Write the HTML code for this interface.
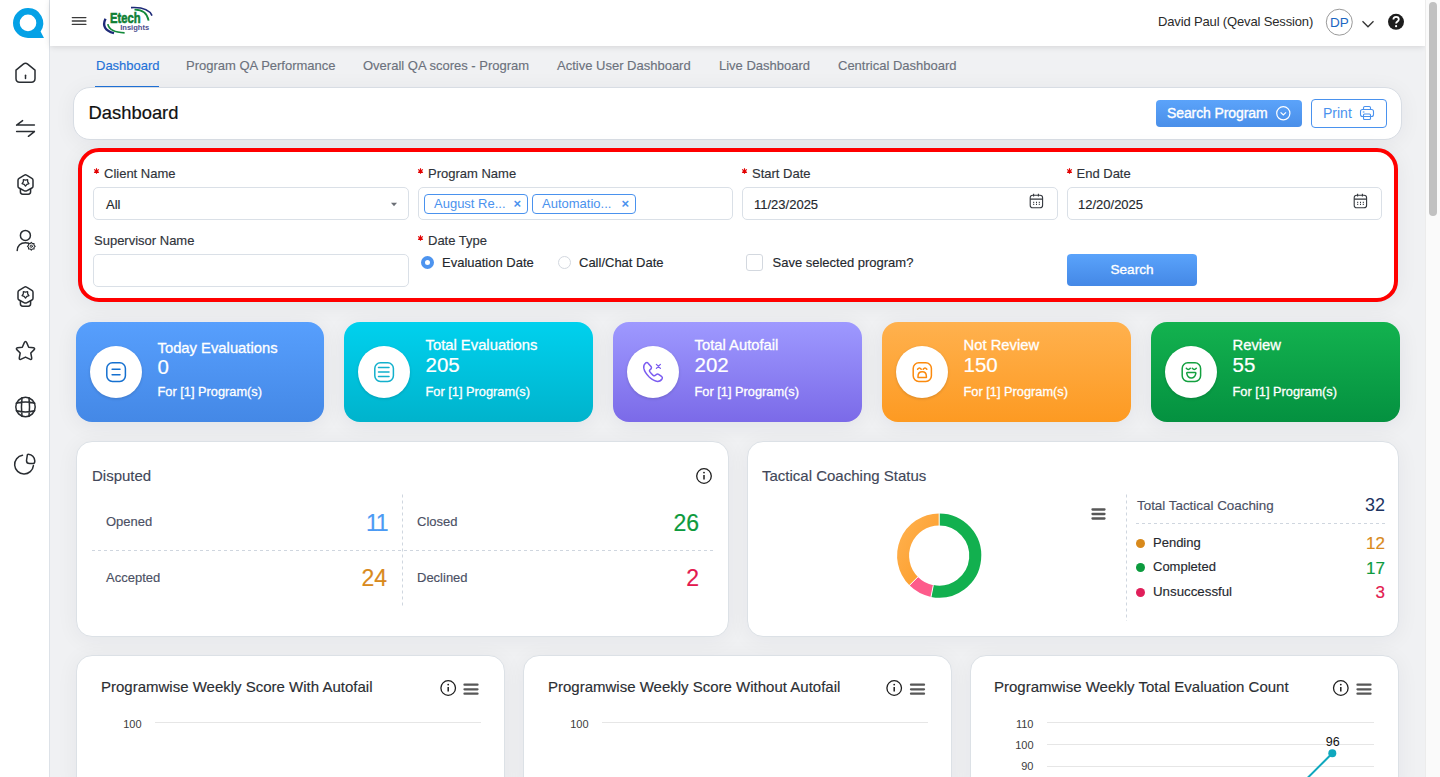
<!DOCTYPE html>
<html><head><meta charset="utf-8">
<style>
*{box-sizing:border-box;margin:0;padding:0}
html,body{width:1440px;height:777px;overflow:hidden;background:#f0f1f3;font-family:"Liberation Sans",sans-serif;color:#212529}
.abs{position:absolute}
#side{left:0;top:0;width:50px;height:777px;background:#fff;border-right:1px solid #dde2e8}
#side svg{position:absolute;left:0;top:0}
#hdr{left:50px;top:0;width:1375px;height:46px;background:#fff;box-shadow:0 1px 6px rgba(0,0,0,.12)}
#sb{left:1425px;top:0;width:15px;height:777px;background:#fafafa;border-left:1px solid #ececec}
#sb div{position:absolute;left:3px;top:2px;width:8px;height:214px;background:#c1c1c1;border-radius:4px}
.tab{top:57px;font-size:13px;color:#6c717d;line-height:17px;white-space:nowrap;-webkit-text-stroke:0.15px #6c717d}
.tab.act{color:#1f72d8;-webkit-text-stroke:0.15px #1f72d8}
.card{background:#fff;border-radius:16px;border:1px solid #dce1e6;box-shadow:0 3px 22px rgba(20,30,50,.055)}
.lbl{font-size:13px;color:#2f333a;line-height:16px;white-space:nowrap;-webkit-text-stroke:0.15px #2f333a}
.req{position:absolute;left:-12px;top:1.4px}
.inp{background:#fff;border:1px solid #dae0e7;border-radius:5px;height:32px}
.txt{font-size:13px;color:#24282e;white-space:nowrap;line-height:16px;-webkit-text-stroke:0.15px #24282e}
.stat{top:322px;width:249px;height:100px;border-radius:16px;box-shadow:0 3px 22px rgba(20,30,50,.07)}
.stat .circ{position:absolute;left:14px;top:24px;width:52px;height:52px;border-radius:50%;background:#fff;box-shadow:0 1px 3px rgba(0,0,0,.15)}
.stat .t1{position:absolute;left:81.5px;font-size:14.8px;color:#fff;white-space:nowrap;line-height:18px;-webkit-text-stroke:0.3px #fff}
.stat .t2{position:absolute;left:81.5px;font-size:20.5px;color:#fff;white-space:nowrap;line-height:22px;-webkit-text-stroke:0.2px #fff}
.stat .t3{position:absolute;left:81.5px;font-size:12.8px;color:#fff;white-space:nowrap;line-height:16px;-webkit-text-stroke:0.3px #fff}
.tag{height:20px;border:1px solid #4a92ee;border-radius:4px;color:#4a92ee;font-size:13px;line-height:18px;padding-left:9px;white-space:nowrap}
.tag span{position:absolute;right:6px;top:0;font-size:13px;font-weight:bold}
.ct{top:678px;font-size:15px;line-height:18px;color:#2b2e33;white-space:nowrap;-webkit-text-stroke:0.15px #2b2e33}
.dl{font-size:13px;color:#4b5064;white-space:nowrap;line-height:16px;-webkit-text-stroke:0.15px currentColor}
.dn{font-size:23px;white-space:nowrap;line-height:24px;-webkit-text-stroke:0.2px currentColor}
</style></head><body>

<!-- sidebar -->
<div id="side" class="abs">
<svg width="50" height="500" viewBox="0 0 50 500" fill="none" stroke="#292d32" stroke-width="1.5" stroke-linecap="round" stroke-linejoin="round">
 <path d="M28 8A15 15 0 1 0 28 38H44L40.6 31.4A15 15 0 0 0 28 8ZM28 14.6A8.3 8.3 0 1 1 28 31.2A8.3 8.3 0 1 1 28 14.6Z" fill="#04a1e6" stroke="none" fill-rule="evenodd"/>
 <!-- home -->
 <path d="M16 70.2L23.3 64.2Q25.5 62.4 27.7 64.2L35 70.2V78.6Q35 82.3 31.3 82.3H19.7Q16 82.3 16 78.6Z"/>
 <path d="M25.5 75.2V78.6"/>
 <!-- arrows -->
 <path d="M16.6 125.1H34.4M16.6 125.1L22.6 120.6M16.6 131.6H34.4M34.4 131.6L28.4 136.3"/>
 <!-- badge 1 -->
 <g transform="translate(0,0)">
 <path d="M24.4 175.2Q25.5 174.5 26.6 175.2L31.9 178.3Q33 179 33 180.2V186.2Q33 187.4 31.9 188L26.6 190.8Q25.5 191.4 24.4 190.8L19.1 188Q18 187.4 18 186.2V180.2Q18 179 19.1 178.3Z"/>
 <path d="M20.4 189V191.8Q20.4 194.2 22.8 194.2H28.2Q30.6 194.2 30.6 191.8V189"/>
 <path d="M25.50 186.10L24.15 184.36L22.08 183.61L23.31 181.79L23.38 179.59L25.50 180.20L27.62 179.59L27.69 181.79L28.92 183.61L26.85 184.36Z" stroke-width="1.3"/>
 </g>
 <!-- user gear -->
 <circle cx="25.4" cy="235.4" r="5"/>
 <path d="M17.2 250.5Q17.8 242.8 25.5 242.7Q27.5 242.7 28.8 243.2"/>
 <path d="M35.20 246.30L33.98 247.41L34.06 249.06L32.41 248.98L31.30 250.20L30.19 248.98L28.54 249.06L28.62 247.41L27.40 246.30L28.62 245.19L28.54 243.54L30.19 243.62L31.30 242.40L32.41 243.62L34.06 243.54L33.98 245.19Z" stroke-width="1.1"/>
 <circle cx="31.3" cy="246.3" r="1.1" stroke-width="1"/>
 <!-- badge 2 -->
 <g transform="translate(0,112)">
 <path d="M24.4 175.2Q25.5 174.5 26.6 175.2L31.9 178.3Q33 179 33 180.2V186.2Q33 187.4 31.9 188L26.6 190.8Q25.5 191.4 24.4 190.8L19.1 188Q18 187.4 18 186.2V180.2Q18 179 19.1 178.3Z"/>
 <path d="M20.4 189V191.8Q20.4 194.2 22.8 194.2H28.2Q30.6 194.2 30.6 191.8V189"/>
 <path d="M25.50 186.10L24.15 184.36L22.08 183.61L23.31 181.79L23.38 179.59L25.50 180.20L27.62 179.59L27.69 181.79L28.92 183.61L26.85 184.36Z" stroke-width="1.3"/>
 </g>
 <!-- star -->
 <path d="M25.5 341.6Q26.2 341.6 26.8 342.9L28.7 347.2L33.5 347.8Q35.3 348.2 34.2 349.6L30.8 353L31.7 357.9Q31.9 360 30.3 359.4L25.5 357.1L20.7 359.4Q19.1 360 19.3 357.9L20.2 353L16.8 349.6Q15.7 348.2 17.5 347.8L22.3 347.2L24.2 342.9Q24.8 341.6 25.5 341.6Z"/>
 <!-- globe -->
 <circle cx="25.5" cy="407" r="9.7"/>
 <path d="M22 397.8Q20.9 407 22 416.2M29 397.8Q30.1 407 29 416.2M16.4 403.2Q25.5 400.9 34.6 403.2M16.4 410.8Q25.5 413.1 34.6 410.8"/>
 <!-- pie -->
 <path d="M22.5 455.3A9.4 9.4 0 1 0 33.4 465.6"/>
 <path d="M27.3 455.1Q27.3 454.2 28.2 454.2Q34.2 454.8 34.8 460.9Q34.8 463.6 33 463.6H29.6Q26.5 463.6 26.5 460.5Z"/>
</svg>
</div>

<!-- header -->
<div id="hdr" class="abs">
<svg style="position:absolute;left:0;top:0" width="1375" height="46" viewBox="50 0 1375 46">
 <path d="M72.3 17.6H85.9M72.3 21H85.9M72.3 24.4H85.9" stroke="#3a3a3a" stroke-width="1.3" stroke-linecap="round"/>
 <!-- logo -->
 <path d="M131 7.6Q148 6.6 152 15.6" fill="none" stroke="#1e2a78" stroke-width="1.7"/>
 <path d="M134.5 9.6Q146.5 9.4 148.6 20.6" fill="none" stroke="#138a3b" stroke-width="1.8"/>
 <path d="M105.5 18.8Q100.5 29.5 114 33.2" fill="none" stroke="#1e2a78" stroke-width="2.4"/>
 <path d="M107.8 24.2Q109.5 32.4 124.6 32.8" fill="none" stroke="#138a3b" stroke-width="1.7"/>
 <text x="110" y="22.6" font-family="Liberation Sans" font-weight="bold" font-size="14.5" fill="#0f7f35" stroke="#0f7f35" stroke-width="0.6" textLength="30.5" lengthAdjust="spacingAndGlyphs">Etech</text>
 <text x="120.2" y="30.3" font-family="Liberation Sans" font-weight="bold" font-size="7.8" fill="#4d4e8e" textLength="29" lengthAdjust="spacingAndGlyphs">Insights</text>
 <!-- right -->
 <circle cx="1339.3" cy="22.2" r="13" fill="#fff" stroke="#9a9a9a" stroke-width="1"/>
 <text x="1339.3" y="26.8" text-anchor="middle" font-family="Liberation Sans" font-size="13.5" fill="#1a66c2">DP</text>
 <path d="M1362.5 21.3L1368 26.8L1373.5 21.3" fill="none" stroke="#333" stroke-width="1.3"/>
 <circle cx="1396" cy="21.8" r="8" fill="#1d1d1d"/>
 <path d="M1393.4 19.6Q1393.4 16.8 1396.1 16.8Q1398.8 16.8 1398.8 19.3Q1398.8 20.8 1397.3 21.6Q1396.1 22.3 1396.1 23.6" fill="none" stroke="#fff" stroke-width="1.8"/>
 <circle cx="1396.1" cy="26.2" r="1.1" fill="#fff"/>
</svg>
<div class="abs" style="left:1108px;top:14px;font-size:13px;line-height:16px;color:#2a2a2a;white-space:nowrap;width:155px;text-align:right;letter-spacing:-0.15px">David Paul (Qeval Session)</div>
</div>
<div id="sb" class="abs"><div></div></div>

<!-- tabs -->
<div class="abs tab act" style="left:96px">Dashboard</div>
<div class="abs" style="left:95px;top:85.5px;width:64px;height:1.8px;background:#1f72d8"></div>
<div class="abs tab" style="left:186px">Program QA Performance</div>
<div class="abs tab" style="left:363px">Overall QA scores - Program</div>
<div class="abs tab" style="left:557px">Active User Dashboard</div>
<div class="abs tab" style="left:719px">Live Dashboard</div>
<div class="abs tab" style="left:838px">Centrical Dashboard</div>

<!-- title card -->
<div class="abs card" style="left:73px;top:87px;width:1329px;height:53px;border:1px solid #d8dde4;border-radius:17px"></div>
<div class="abs" style="left:88.5px;top:102px;font-size:18.4px;line-height:21px;color:#111;-webkit-text-stroke:0.2px #111">Dashboard</div>
<div class="abs" style="left:1156px;top:100px;width:146px;height:27px;border-radius:4px;background:linear-gradient(#5ba3fa,#4a8fe9)"></div>
<div class="abs" style="left:1167px;top:105px;font-size:14px;line-height:16px;color:#fff;white-space:nowrap;letter-spacing:-0.1px;-webkit-text-stroke:0.35px #fff">Search Program</div>
<svg class="abs" style="left:1275px;top:105px" width="17" height="17" fill="none" stroke="#fff" stroke-width="1.2"><circle cx="8.3" cy="8.3" r="6.6"/><path d="M5.6 7.3L8.3 10L11 7.3"/></svg>
<div class="abs" style="left:1311px;top:99px;width:76px;height:29px;border-radius:4px;border:1px solid #4a92ee;background:#fff"></div>
<div class="abs" style="left:1323px;top:105px;font-size:14px;line-height:16px;color:#4a92ee;white-space:nowrap">Print</div>
<svg class="abs" style="left:1359px;top:105px" width="16" height="16" fill="none" stroke="#4a92ee" stroke-width="1.1"><path d="M4.5 4.5V2.8Q4.5 1.5 5.8 1.5H10.2Q11.5 1.5 11.5 2.8V4.5"/><rect x="1.5" y="4.5" width="13" height="7" rx="2"/><rect x="4.5" y="9" width="7" height="5.5" rx="1"/><path d="M3.8 7h1.6"/></svg>

<!-- filter card -->
<div class="abs" style="left:78px;top:148px;width:1320px;height:154px;border:4px solid #f00;border-radius:21px;background:#fff;box-shadow:0 0 0 1px #dfeef3,0 3px 22px rgba(20,30,50,.06)"></div>
<!-- labels -->
<div class="abs lbl" style="left:104px;top:166px"><svg class="req" width="8" height="8" viewBox="0 0 8 8"><path d="M4.5 1.2V6.8M2.1 2.6L6.9 5.4M2.1 5.4L6.9 2.6" stroke="#e20000" stroke-width="1.1"/></svg>Client Name</div>
<div class="abs lbl" style="left:428px;top:166px"><svg class="req" width="8" height="8" viewBox="0 0 8 8"><path d="M4.5 1.2V6.8M2.1 2.6L6.9 5.4M2.1 5.4L6.9 2.6" stroke="#e20000" stroke-width="1.1"/></svg>Program Name</div>
<div class="abs lbl" style="left:752px;top:166px"><svg class="req" width="8" height="8" viewBox="0 0 8 8"><path d="M4.5 1.2V6.8M2.1 2.6L6.9 5.4M2.1 5.4L6.9 2.6" stroke="#e20000" stroke-width="1.1"/></svg>Start Date</div>
<div class="abs lbl" style="left:1076.5px;top:166px"><svg class="req" width="8" height="8" viewBox="0 0 8 8"><path d="M4.5 1.2V6.8M2.1 2.6L6.9 5.4M2.1 5.4L6.9 2.6" stroke="#e20000" stroke-width="1.1"/></svg>End Date</div>
<div class="abs lbl" style="left:94px;top:233px">Supervisor Name</div>
<div class="abs lbl" style="left:428px;top:233px"><svg class="req" width="8" height="8" viewBox="0 0 8 8"><path d="M4.5 1.2V6.8M2.1 2.6L6.9 5.4M2.1 5.4L6.9 2.6" stroke="#e20000" stroke-width="1.1"/></svg>Date Type</div>
<!-- inputs -->
<div class="abs inp" style="left:93px;top:187px;height:33px;width:316px"></div>
<div class="abs txt" style="left:106px;top:197px">All</div>
<svg class="abs" style="left:390px;top:202px" width="8" height="5"><path d="M1 0.8H7L4 4.2Z" fill="#6b6f76"/></svg>
<div class="abs inp" style="left:418px;top:187px;height:33px;width:315px"></div>
<div class="abs tag" style="left:424px;top:194px;width:104px">August Re...<span>&#215;</span></div>
<div class="abs tag" style="left:532px;top:194px;width:104px">Automatio...<span>&#215;</span></div>
<div class="abs inp" style="left:742px;top:187px;height:33px;width:316px"></div>
<div class="abs txt" style="left:754px;top:197px">11/23/2025</div>
<div class="abs inp" style="left:1067px;top:187px;height:33px;width:315px"></div>
<div class="abs txt" style="left:1078px;top:197px">12/20/2025</div>
<svg class="abs" style="left:1028px;top:193px" width="16" height="16" fill="none" stroke="#33373d" stroke-width="1.1"><rect x="2.2" y="2.2" width="12.4" height="12.6" rx="2.6"/><path d="M2.2 6.1H14.6M5.6 0.8V3.6M10.4 0.8V3.6"/><path d="M5.2 9.3h1M8 9.3h1M10.8 9.3h1M5.2 11.4h1M8 11.4h1M10.8 11.4h1" stroke-width="1.2"/></svg>
<svg class="abs" style="left:1352px;top:193px" width="16" height="16" fill="none" stroke="#33373d" stroke-width="1.1"><rect x="2.2" y="2.2" width="12.4" height="12.6" rx="2.6"/><path d="M2.2 6.1H14.6M5.6 0.8V3.6M10.4 0.8V3.6"/><path d="M5.2 9.3h1M8 9.3h1M10.8 9.3h1M5.2 11.4h1M8 11.4h1M10.8 11.4h1" stroke-width="1.2"/></svg>
<div class="abs inp" style="left:93px;top:254px;height:33px;width:316px"></div>
<!-- radios -->
<div class="abs" style="left:420.5px;top:255.5px;width:13.5px;height:13.5px;border-radius:50%;border:4px solid #4d94ef;background:#fff"></div>
<div class="abs txt" style="left:442px;top:254.5px">Evaluation Date</div>
<div class="abs" style="left:557.8px;top:255.5px;width:13.5px;height:13.5px;border-radius:50%;border:1px solid #d3d8df;background:#fff"></div>
<div class="abs txt" style="left:579px;top:254.5px">Call/Chat Date</div>
<div class="abs" style="left:746px;top:254px;width:17px;height:17px;border-radius:3px;border:1px solid #d3d8df;background:#fff"></div>
<div class="abs txt" style="left:772.5px;top:254.5px">Save selected program?</div>
<div class="abs btn" style="left:1067px;top:254px;width:130px;height:32px;background:linear-gradient(#5aa3fb,#4488e6);border-radius:4px;color:#fff;font-size:13.6px;-webkit-text-stroke:0.35px #fff;line-height:32px;text-align:center">Search</div>

<!-- stat cards -->
<div class="abs stat" style="left:76px;width:248px;background:linear-gradient(#579ffd,#4488e6)"><div class="circ"><svg style="position:absolute;left:10px;top:9px" width="32" height="32" fill="none" stroke="#1570d0" stroke-width="1.5" stroke-linecap="round" stroke-linejoin="round"><rect x="6.8" y="7.8" width="18.6" height="18.6" rx="5.6"/><path d="M12.1 14.2H20M12.1 19.7H20"/></svg></div>
 <div class="t1" style="top:17px">Today Evaluations</div>
 <div class="t2" style="top:33.5px">0</div>
 <div class="t3" style="top:62px">For [1] Program(s)</div></div>
<div class="abs stat" style="left:344px;background:linear-gradient(#00d1ee,#00b3cc)"><div class="circ"><svg style="position:absolute;left:10px;top:9px" width="32" height="32" fill="none" stroke="#12b0cc" stroke-width="1.5" stroke-linecap="round" stroke-linejoin="round"><rect x="6.8" y="7.8" width="18.6" height="18.6" rx="5.6"/><path d="M10.5 12.4H21M10.5 16.9H21M10.5 21.4H21"/></svg></div>
 <div class="t1" style="top:14px">Total Evaluations</div>
 <div class="t2" style="top:32px">205</div>
 <div class="t3" style="top:62px">For [1] Program(s)</div></div>
<div class="abs stat" style="left:613px;background:linear-gradient(#9e99ff,#7b6ae8)"><div class="circ"><svg style="position:absolute;left:10px;top:9px" width="32" height="32" fill="none" stroke="#7b5cf0" stroke-width="1.5" stroke-linecap="round" stroke-linejoin="round"><path d="M11.3 8.4Q10.2 7 8.6 8Q6.3 9.8 6.8 13.2Q7.6 17.5 12.2 22Q16.8 26.2 20.6 26.4Q23.6 26.4 25.2 23.6Q25.8 22.3 24.5 21.4L21.6 19.4Q20.4 18.6 19.2 19.6L17.8 20.6Q17 21 16.2 20.4Q14 18.5 12.6 16.4Q12.2 15.6 12.8 15L14.2 13.6Q14.8 12.8 14.2 11.8Z"/><path d="M19.4 9.4L23.4 13.4M23.4 9.4L19.4 13.4" stroke-width="1.3"/></svg></div>
 <div class="t1" style="top:14px">Total Autofail</div>
 <div class="t2" style="top:32px">202</div>
 <div class="t3" style="top:62px">For [1] Program(s)</div></div>
<div class="abs stat" style="left:882px;background:linear-gradient(#ffb14e,#fd9a22)"><div class="circ"><svg style="position:absolute;left:10px;top:9px" width="32" height="32" fill="none" stroke="#fb8a0e" stroke-width="1.5" stroke-linecap="round" stroke-linejoin="round"><rect x="7.2" y="7.8" width="18.2" height="18.6" rx="5.6"/><path d="M11.6 14.3Q13.4 11.8 15.2 14.3M17.2 14.3Q19 11.8 20.8 14.3"/><path d="M12 22.4V21.4Q12 16.8 16.2 16.8Q20.4 16.8 20.4 21.4V22.4Z"/></svg></div>
 <div class="t1" style="top:14px">Not Review</div>
 <div class="t2" style="top:32px">150</div>
 <div class="t3" style="top:62px">For [1] Program(s)</div></div>
<div class="abs stat" style="left:1151px;background:linear-gradient(#13b24f,#049140)"><div class="circ"><svg style="position:absolute;left:10px;top:9px" width="32" height="32" fill="none" stroke="#13a03f" stroke-width="1.5" stroke-linecap="round" stroke-linejoin="round"><rect x="7.2" y="7.8" width="18.4" height="18.6" rx="5.6"/><path d="M11.3 13.3Q13.3 15.6 15.3 13.3M17.3 13.3Q19.3 15.6 21.3 13.3"/><path d="M12.3 17.6H20.3Q21 17.6 20.8 18.6Q19.8 23 16.3 23Q12.8 23 11.8 18.6Q11.6 17.6 12.3 17.6Z"/></svg></div>
 <div class="t1" style="top:14px">Review</div>
 <div class="t2" style="top:32px">55</div>
 <div class="t3" style="top:62px">For [1] Program(s)</div></div>

<!-- disputed -->
<div class="abs card" style="left:76px;top:441px;width:653px;height:196px;"></div>
<div class="abs" style="left:92px;top:467px;font-size:15px;line-height:18px;color:#424759;white-space:nowrap;-webkit-text-stroke:0.15px #424759">Disputed</div>
<svg class="abs" style="left:694px;top:466px" width="20" height="20" fill="none" stroke="#1f1f1f" stroke-width="1.3"><circle cx="10" cy="10" r="7.3"/><path d="M10 9V13.6" stroke-width="1.5"/><circle cx="10" cy="6.6" r="0.9" fill="#1f1f1f" stroke="none"/></svg>
<svg class="abs" style="left:90px;top:494px" width="630" height="114"><path d="M312.5 0.5V112" stroke="#cfd6df" stroke-width="1" stroke-dasharray="3 3"/><path d="M2 56.5H624" stroke="#cfd6df" stroke-width="1" stroke-dasharray="3 3"/></svg>
<div class="abs dl" style="left:106px;top:513.5px">Opened</div>
<div class="abs dl" style="left:106px;top:569.5px">Accepted</div>
<div class="abs dl" style="left:417px;top:513.5px">Closed</div>
<div class="abs dl" style="left:417px;top:569.5px">Declined</div>
<div class="abs dn" style="left:287px;width:100px;text-align:right;top:511px;color:#4b9af4;letter-spacing:-1.5px">11</div>
<div class="abs dn" style="left:287px;width:100px;text-align:right;top:566px;color:#d98a1c">24</div>
<div class="abs dn" style="left:599px;width:100px;text-align:right;top:511px;color:#0d9a3d">26</div>
<div class="abs dn" style="left:599px;width:100px;text-align:right;top:566px;color:#e3194f">2</div>
<!-- tactical -->
<div class="abs card" style="left:747px;top:441px;width:652px;height:196px;"></div>
<div class="abs" style="left:762px;top:467px;font-size:15px;line-height:18px;color:#424759;white-space:nowrap;-webkit-text-stroke:0.15px #424759">Tactical Coaching Status</div>
<svg class="abs" style="left:889px;top:505px" width="100" height="100">
 <defs><linearGradient id="og" x1="0" y1="0" x2="1" y2="1"><stop offset="0" stop-color="#ffb04c"/><stop offset="1" stop-color="#fb9a26"/></linearGradient></defs>
 <g transform="translate(50.2,50.6)" fill="none" stroke-width="12">
  <path d="M0 -36.1A36.1 36.1 0 1 1 -7.04 35.41" stroke="#12b04f"/>
  <path d="M-7.04 35.41A36.1 36.1 0 0 1 -25.53 25.53" stroke="#fd5b8b"/>
  <path d="M-25.53 25.53A36.1 36.1 0 0 1 0 -36.1" stroke="url(#og)"/>
  <path d="M0 -43V-29M-8.4 42.2L-5.9 29.7M-30.4 30.4L-21.4 21.4" stroke="#fff" stroke-width="1"/>
 </g>
</svg>
<svg class="abs" style="left:1089px;top:506.4px" width="20" height="16"><path d="M3.5 3.5H15.5M3.5 8H15.5M3.5 12.5H15.5" stroke="#575757" stroke-width="2.3" stroke-linecap="round"/></svg>
<svg class="abs" style="left:1125px;top:494px" width="262" height="128"><path d="M1.5 0.5V127" stroke="#cfd6df" stroke-width="1" stroke-dasharray="3 3"/><path d="M11 29.5H260" stroke="#cfd6df" stroke-width="1" stroke-dasharray="3 3"/></svg>
<div class="abs dl" style="left:1137px;top:497.5px;font-size:13.4px">Total Tactical Coaching</div>
<div class="abs" style="left:1285px;width:100px;text-align:right;top:494px;font-size:18px;line-height:22px;color:#1d3461">32</div>
<div class="abs" style="left:1136px;top:539px;width:9px;height:9px;border-radius:50%;background:#d8891b"></div>
<div class="abs" style="left:1136px;top:563px;width:9px;height:9px;border-radius:50%;background:#0c9b3e"></div>
<div class="abs" style="left:1136px;top:587.5px;width:9px;height:9px;border-radius:50%;background:#e01f5a"></div>
<div class="abs dl" style="left:1153px;top:534.5px;color:#26292f">Pending</div>
<div class="abs dl" style="left:1153px;top:559px;color:#26292f">Completed</div>
<div class="abs dl" style="left:1153px;top:583.5px;color:#26292f;font-size:13.3px">Unsuccessful</div>
<div class="abs dn" style="left:1285px;width:100px;text-align:right;top:534px;font-size:17px;line-height:20px;color:#d98a1c">12</div>
<div class="abs dn" style="left:1285px;width:100px;text-align:right;top:558.5px;font-size:17px;line-height:20px;color:#0d9a3d">17</div>
<div class="abs dn" style="left:1285px;width:100px;text-align:right;top:583px;font-size:17px;line-height:20px;color:#e3194f">3</div>

<!-- charts -->
<div class="abs card" style="left:76px;top:655px;width:429px;height:140px"></div>
<div class="abs card" style="left:523px;top:655px;width:429px;height:140px"></div>
<div class="abs card" style="left:970px;top:655px;width:429px;height:140px"></div>
<div class="abs ct" style="left:101px">Programwise Weekly Score With Autofail</div>
<div class="abs ct" style="left:548px">Programwise Weekly Score Without Autofail</div>
<div class="abs ct" style="left:994px">Programwise Weekly Total Evaluation Count</div>
<svg class="abs" style="left:0;top:640px" width="1440" height="137" fill="none">
 <g stroke="#1f1f1f" stroke-width="1.3">
  <circle cx="448.2" cy="48" r="7.3"/><circle cx="894.2" cy="48" r="7.3"/><circle cx="1340.8" cy="48" r="7.3"/>
  <path d="M448.2 47V51.6M894.2 47V51.6M1340.8 47V51.6" stroke-width="1.5"/>
 </g>
 <g fill="#1f1f1f"><circle cx="448.2" cy="44.6" r="0.9"/><circle cx="894.2" cy="44.6" r="0.9"/><circle cx="1340.8" cy="44.6" r="0.9"/></g>
 <g stroke="#575757" stroke-width="2.3" stroke-linecap="round"><path d="M464.5 44.7H477.5M464.5 49.3H477.5M464.5 53.7H477.5"/><path d="M911 44.7H924M911 49.3H924M911 53.7H924"/><path d="M1357.5 44.7H1370.5M1357.5 49.3H1370.5M1357.5 53.7H1370.5"/></g>
 <g stroke="#e6e6e6" stroke-width="1"><path d="M155 82.5H481"/><path d="M602 82.5H928"/><path d="M1047 82.5H1374M1047 104.5H1374M1047 126.5H1374"/></g>
 <g font-family="Liberation Sans" font-size="11" fill="#3c3c3c" stroke="none">
  <text x="141.5" y="87.5" text-anchor="end">100</text>
  <text x="588.5" y="87.5" text-anchor="end">100</text>
  <text x="1033.5" y="87.5" text-anchor="end">110</text>
  <text x="1033.5" y="108.5" text-anchor="end">100</text>
  <text x="1033.5" y="130" text-anchor="end">90</text>
 </g>
 <path d="M1332.3 113.3L1307.5 138" stroke="#0fa8be" stroke-width="2"/>
 <circle cx="1332.3" cy="113.3" r="4" fill="#0fa8be"/>
 <text x="1332.8" y="106" text-anchor="middle" font-family="Liberation Sans" font-size="12.5" fill="#111">96</text>
</svg>

</body></html>
